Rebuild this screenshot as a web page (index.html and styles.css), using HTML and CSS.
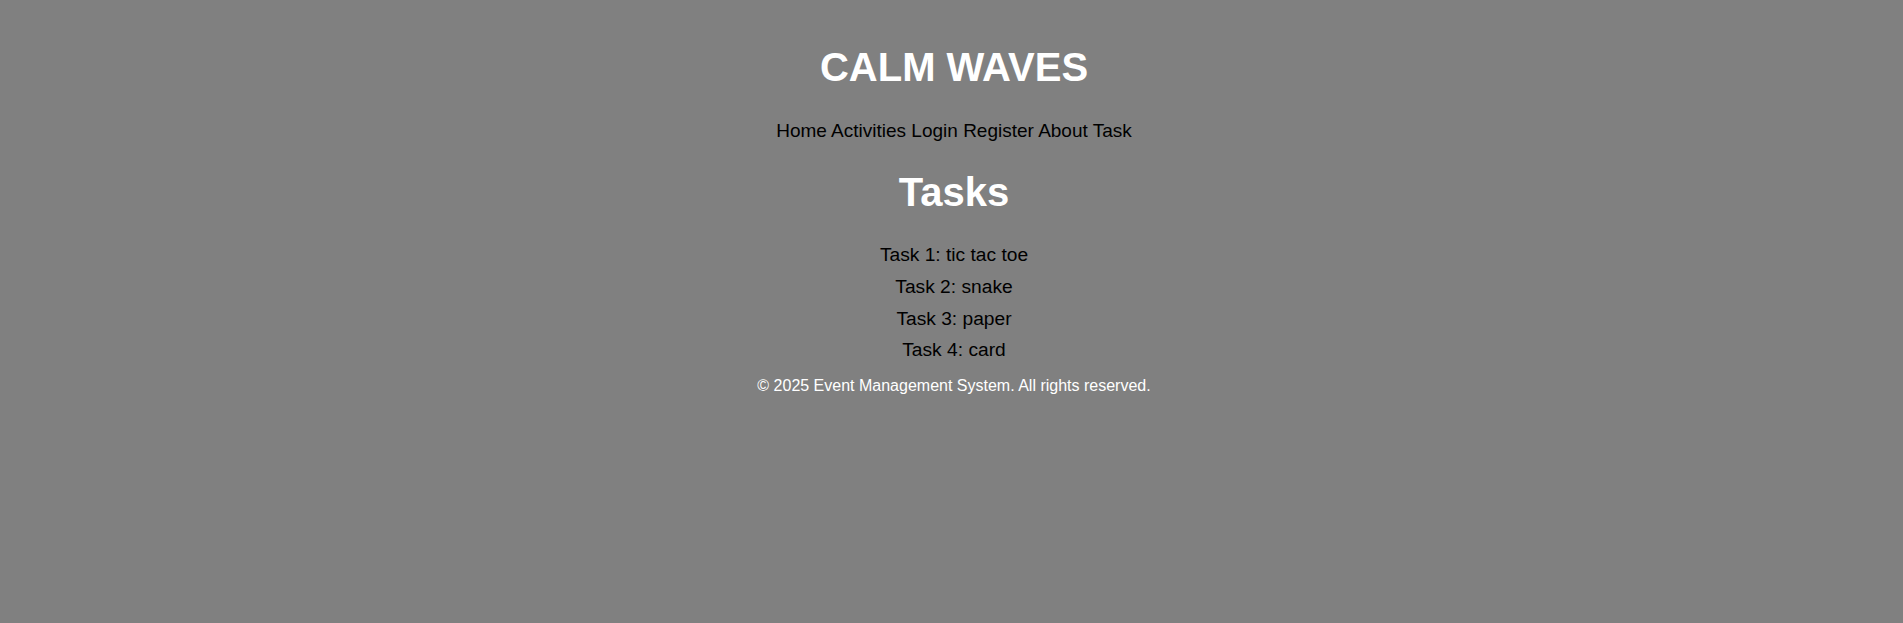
FILE: index.html
```html
<!DOCTYPE html>
<html lang="en">
<head>
<meta charset="utf-8">
<title>Calm Waves - Tasks</title>
<link rel="stylesheet" href="styles.css">
</head>
<body>
<header class="site-header">
  <h1 class="site-title">CALM WAVES</h1>
  <nav class="site-nav">
    <a href="#">Home</a>
    <a href="#">Activities</a>
    <a href="#">Login</a>
    <a href="#">Register</a>
    <a href="#">About</a>
    <a href="#">Task</a>
  </nav>
</header>
<main class="content">
  <h2 class="section-title">Tasks</h2>
  <ul class="task-list">
    <li>Task 1: tic tac toe</li>
    <li>Task 2: snake</li>
    <li>Task 3: paper</li>
    <li>Task 4: card</li>
  </ul>
</main>
<footer class="site-footer">
  <p>&copy; 2025 Event Management System. All rights reserved.</p>
</footer>
</body>
</html>
```

FILE: styles.css
```css
html, body {
  margin: 0;
  padding: 0;
}
body {
  background: #808080;
  font-family: "Liberation Sans", Arial, sans-serif;
  font-size: 16px;
  color: #000;
  text-align: center;
  padding-left: 5px;
}
.site-header {
  padding-top: 45px;
}
.site-title {
  margin: 0;
  font-size: 40px;
  font-weight: bold;
  color: #fff;
  line-height: normal;
}
.site-nav {
  margin-top: 30px;
  font-size: 19px;
  line-height: 22px;
}
.site-nav a {
  color: #000;
  text-decoration: none;
}
.section-title {
  margin: 28px 0 29px;
  font-size: 40px;
  font-weight: bold;
  color: #fff;
  line-height: normal;
}
.task-list {
  list-style: none;
  margin: 0;
  padding: 0;
  font-size: 19.2px;
  line-height: normal;
}
.task-list li {
  margin-bottom: 9.8px;
}
.task-list li:last-child {
  margin-bottom: 0;
}
.site-footer {
  margin-top: 16px;
  color: #fff;
}
.site-footer p {
  margin: 0;
  line-height: normal;
}
```
